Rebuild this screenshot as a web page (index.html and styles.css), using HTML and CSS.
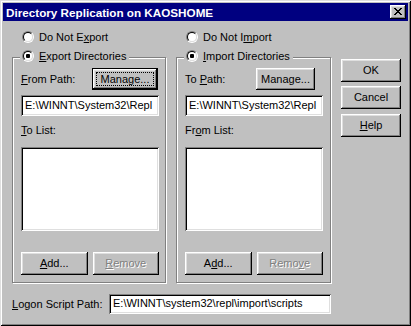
FILE: index.html
```html
<!DOCTYPE html>
<html>
<head>
<meta charset="utf-8">
<link rel="stylesheet" href="styles.css">
</head>
<body>
<div class="window">
  <div class="titlebar">
    <span class="title">Directory Replication on KAOSHOME</span>
    <button class="close" aria-label="Close"><svg width="8" height="7" viewBox="0 0 8 7"><path fill="#000" d="M0 0h2v1h-2z M6 0h2v1h-2z M1 1h2v1h-2z M5 1h2v1h-2z M2 2h4v1h-4z M3 3h2v1h-2z M2 4h4v1h-4z M1 5h2v1h-2z M5 5h2v1h-2z M0 6h2v1h-2z M6 6h2v1h-2z"/></svg></button>
  </div>
  <div class="content">
    <div class="main">
      <div class="groups">
        <div class="col col-left">
          <div class="radio-row"><span class="radio"></span><span>Do Not E<u>x</u>port</span></div>
          <div class="group group-left">
            <div class="legend"><span class="radio checked"></span><span><u>E</u>xport Directories</span></div>
            <div class="path-row"><span><u>F</u>rom Path:</span><button class="btn btn-manage default">Manage...</button></div>
            <div class="field">E:\WINNT\System32\Repl</div>
            <div class="list-label"><u>T</u>o List:</div>
            <div class="listbox"></div>
            <div class="btn-row"><button class="btn"><u>A</u>dd...</button><button class="btn disabled"><u>R</u>emove</button></div>
          </div>
        </div>
        <div class="col col-right">
          <div class="radio-row"><span class="radio"></span><span>Do Not I<u>m</u>port</span></div>
          <div class="group group-right">
            <div class="legend"><span class="radio checked"></span><span><u>I</u>mport Directories</span></div>
            <div class="path-row"><span>To <u>P</u>ath:</span><button class="btn btn-manage btn-manage-right">Manage...</button></div>
            <div class="field">E:\WINNT\System32\Repl</div>
            <div class="list-label">Fr<u>o</u>m List:</div>
            <div class="listbox"></div>
            <div class="btn-row"><button class="btn">A<u>d</u>d...</button><button class="btn disabled">Remo<u>v</u>e</button></div>
          </div>
        </div>
      </div>
      <div class="logon"><span class="logon-label"><u>L</u>ogon Script Path:</span><div class="field logon-field">E:\WINNT\system32\repl\import\scripts</div></div>
    </div>
    <div class="buttons">
      <button class="btn side ok">OK</button>
      <button class="btn side cancel">Cancel</button>
      <button class="btn side help"><u>H</u>elp</button>
    </div>
  </div>
</div>
</body>
</html>
```

FILE: styles.css
```css
* { box-sizing: border-box; }
html, body { margin: 0; padding: 0; background: #c0c0c0; }
body {
  font-family: "Liberation Sans", Arial, sans-serif;
  font-size: 11px;
  line-height: 13px;
  color: #000;
}
u { text-decoration: underline; text-underline-offset: 1px; }

.window {
  width: 411px;
  height: 326px;
  padding: 3px;
  background: #c0c0c0;
  box-shadow: inset 1px 1px #dfdfdf, inset -1px -1px #000, inset 2px 2px #fff, inset -2px -2px #808080;
  display: flex;
  flex-direction: column;
}

.titlebar {
  height: 18px;
  background: #000080;
  display: flex;
  align-items: center;
  justify-content: space-between;
  padding: 0 2px 0 3px;
}
.title {
  color: #fff;
  font-weight: bold;
  font-size: 11.7px;
}
.close {
  width: 16px;
  height: 14px;
  padding: 0;
  border: none;
  background: #c0c0c0;
  box-shadow: inset -1px -1px #000, inset 1px 1px #fff, inset -2px -2px #808080, inset 2px 2px #dfdfdf;
  display: flex;
  align-items: center;
  justify-content: center;
}
.close svg { display: block; margin: 0 0 1px 0; }

.content {
  flex: 1;
  display: flex;
  padding: 8px 0 0 9px;
}
.main { width: 320px; display: flex; flex-direction: column; }
.groups { display: flex; gap: 10px; }
.col-left { width: 154px; }
.col-right { width: 155px; }

.radio-row {
  height: 16px;
  display: flex;
  align-items: center;
  gap: 5px;
  padding-left: 10px;
}
.radio {
  position: relative;
  flex: none;
  width: 12px;
  height: 12px;
  border-radius: 50%;
  border: 1px solid;
  border-color: #808080 #fff #fff #808080;
}
.radio::before {
  content: "";
  position: absolute;
  inset: 0;
  border-radius: 50%;
  border: 1px solid;
  border-color: #000 #dfdfdf #dfdfdf #000;
  background: #fff;
}
.radio.checked::after {
  content: "";
  position: absolute;
  left: 3px;
  top: 3px;
  width: 4px;
  height: 4px;
  border-radius: 1px;
  background: #000;
}

.group {
  position: relative;
  margin-top: 12px;
  border: 1px solid #808080;
  box-shadow: inset 1px 1px #fff, 1px 1px #fff;
  padding: 10px 6px 7px 8px;
  display: flex;
  flex-direction: column;
}
.legend {
  position: absolute;
  top: -10px;
  left: 7px;
  height: 16px;
  padding: 0 3px 0 2px;
  background: #c0c0c0;
  display: flex;
  align-items: center;
  gap: 5px;
}
.path-row {
  height: 22px;
  display: flex;
  align-items: center;
  justify-content: space-between;
}
.field {
  margin-top: 5px;
  width: 138px;
  height: 21px;
  background: #fff;
  box-shadow: inset 1px 1px #808080, inset -1px -1px #fff, inset 2px 2px #000, inset -2px -2px #dfdfdf;
  padding: 4px 3px 0 4px;
  white-space: nowrap;
  overflow: hidden;
}
.list-label { margin-top: 8px; height: 13px; }
.listbox {
  margin-top: 10px;
  width: 138px;
  height: 84px;
  background: #fff;
  box-shadow: inset 1px 1px #808080, inset -1px -1px #fff, inset 2px 2px #000, inset -2px -2px #dfdfdf;
}
.btn-row {
  margin-top: 21px;
  width: 138px;
  display: flex;
  gap: 5px;
}
.btn {
  font: inherit;
  color: #000;
  background: #c0c0c0;
  border: none;
  padding: 0;
  height: 23px;
  box-shadow: inset -1px -1px #000, inset 1px 1px #fff, inset -2px -2px #808080, inset 2px 2px #dfdfdf;
  display: flex;
  align-items: center;
  justify-content: center;
}
.btn-row .btn { flex: 1; }
.btn.disabled { color: #808080; text-shadow: 1px 1px 0 #fff; }
.btn-manage { width: 66px; height: 22px; margin-right: 1px; }
.btn-manage-right { width: 59px; margin-right: 9px; }
.btn.default {
  border: 1px solid #000;
  outline: 1px dotted #000;
  outline-offset: -5px;
}

.logon {
  margin-top: 11px;
  display: flex;
  align-items: center;
  justify-content: space-between;
}
.logon-field { margin-top: 0; width: 222px; height: 20px; padding-top: 3px; margin-right: 1px; }

.buttons {
  padding: 30px 0 0 9px;
  display: flex;
  flex-direction: column;
}
.btn.side { width: 60px; height: 23px; }
.cancel { margin-top: 4px; }
.help { margin-top: 5px; }
```
